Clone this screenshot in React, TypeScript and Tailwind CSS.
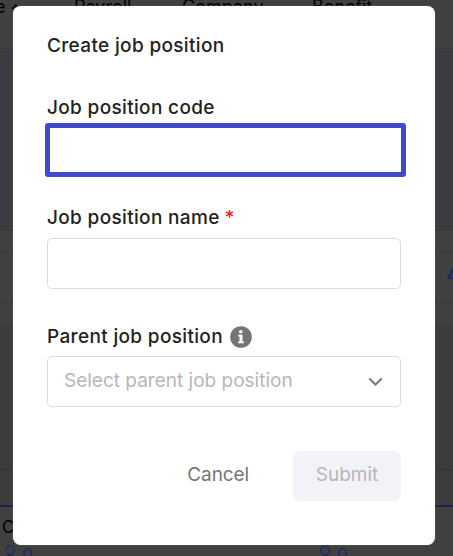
import React, { useState } from 'react';

interface FieldLabelProps {
    text: string;
    children?: React.ReactNode;
}

const FieldLabel: React.FC<FieldLabelProps> = ({ text, children }) => (
    <label className="flex h-6 items-center text-[19px] leading-6 font-medium tracking-[0.34px] whitespace-nowrap text-[#222222]">
        {text}
        {children}
    </label>
);

const UserCount: React.FC = () => (
    <div className="flex h-5 items-start text-[#1f2863]">
        <svg width="12" height="20" viewBox="0 0 12 20" fill="none" stroke="currentColor" strokeWidth="1.2">
            <circle cx="6" cy="5" r="4.3" />
            <path d="M1 16c0-4 2-6 5-6s5 2 5 6" />
        </svg>
        <span className="ml-[6px] text-[17px] leading-5">0</span>
    </div>
);

// Dimmed page that stays visible around the dialog
const Backdrop: React.FC = () => (
    <div className="flex h-full flex-col bg-[#404040] text-black">
        <div className="h-[49px] shrink-0 border-b border-[#37383a]">
            <div className="-mt-[5px] flex text-[18px] leading-6 whitespace-nowrap">
                <div className="-ml-[5px] flex w-[79px] items-center">
                    <span>e</span>
                    <svg className="ml-[5px]" width="10" height="6" viewBox="0 0 10 6" fill="none" stroke="currentColor" strokeWidth="1.5">
                        <path d="M1 5l4-4 4 4" />
                    </svg>
                </div>
                <span className="w-[108px]">Payroll</span>
                <span className="w-[130px]">Company</span>
                <span>Benefit</span>
            </div>
        </div>
        <div className="h-[178px] shrink-0 border-b border-[#333437] bg-[#3c3d40]" />
        <div className="h-[3px] shrink-0 border-b border-[#333437] bg-[#3d3e40]" />
        <div className="h-[22px] shrink-0 border-b border-[#353535]" />
        <div className="flex h-[51px] shrink-0 items-center justify-end overflow-hidden border-b border-[#353535]">
            <span className="-mr-[7px] -mt-[4px] text-[21px] font-semibold text-[#1f2863]">4</span>
        </div>
        <div className="h-[21px] shrink-0" />
        <div className="h-[147px] shrink-0 border-b-2 border-[#373737] bg-[#3c3c3c]" />
        <div className="h-[36px] shrink-0 border-b-2 border-[#1a2050] bg-[#3d3d3d]">
            <div className="ml-auto mr-[2px] h-full w-px bg-[#383838]" />
        </div>
        <div className="grow">
            <div className="ml-[2px] mt-[8px] text-[17px] leading-6">C</div>
            <div className="mt-[6px] flex">
                <div className="w-[319px] pl-[4px]"><UserCount /></div>
                <UserCount />
            </div>
        </div>
    </div>
);

export const CreateJobPosition: React.FC = () => {
    const [code, setCode] = useState('');
    const [name, setName] = useState('');

    return (
        <div className="absolute left-[13px] top-[6px] flex h-[539px] w-[422px] flex-col rounded-lg bg-white px-[34px] pt-[28px] shadow-[0_0_1px_#aaaaaa]">
            <h1 className="text-[19px] leading-6 font-medium tracking-[0.34px] whitespace-nowrap text-[#222222]">Create job position</h1>

            <div className="mt-[38px]">
                <FieldLabel text="Job position code" />
                <input
                    type="text"
                    value={code}
                    onChange={(e) => setCode(e.target.value)}
                    className="-ml-[2px] mt-[3px] block h-[54px] w-[361px] rounded-[3px] border-5 border-[#4149cc] bg-white px-4 text-[19px] outline-none"
                />
            </div>

            <div className="mt-[29px]">
                <FieldLabel text="Job position name">
                    <span className="ml-[5px] font-normal text-[#ff0000]">*</span>
                </FieldLabel>
                <input
                    type="text"
                    value={name}
                    onChange={(e) => setName(e.target.value)}
                    className="mt-[8px] block h-[51px] w-full rounded-[5px] border border-[#dddddd] bg-white px-4 text-[19px] outline-none"
                />
            </div>

            <div className="mt-[36px]">
                <FieldLabel text="Parent job position">
                    <svg className="ml-[7px]" width="22" height="22" viewBox="0 0 22 22">
                        <circle cx="11" cy="11" r="10.8" fill="#757575" />
                        <circle cx="10.8" cy="5.8" r="1.8" fill="#fff" />
                        <path d="M8.2 8.8h4.3v6.7h1.3v1.8H8.2v-1.8h1.3v-4.9H8.200z" fill="#fff" />
                    </svg>
                </FieldLabel>
                <button className="mt-[7px] flex h-[51px] w-full items-center justify-between rounded-[5px] border border-[#dddddd] pl-4 pr-[17px]">
                    <span className="-mt-[2px] text-[19px] leading-6 whitespace-nowrap text-[#b7b7b7]">Select parent job position</span>
                    <svg width="15" height="10" viewBox="0 0 15 10" fill="none" stroke="#757575" strokeWidth="2">
                        <path d="M1.3 1.5 7.5 7.7l6.2-6.2" />
                    </svg>
                </button>
            </div>

            <div className="mt-[44px] flex items-center justify-end">
                <button className="-mt-[2px] mr-[44px] text-[19px] leading-6 tracking-[-0.1px] text-[#757575]">Cancel</button>
                <button disabled className="h-[50px] w-[108px] rounded-lg bg-[#f2f3f8] pb-[2px] text-[19px] leading-6 text-[#b7b7b7]">
                    Submit
                </button>
            </div>
        </div>
    );
};

const App: React.FC = () => (
    <div className="relative h-[556px] w-[453px] overflow-hidden font-['Inter',sans-serif]">
        <Backdrop />
        <CreateJobPosition />
    </div>
);

export default App;
